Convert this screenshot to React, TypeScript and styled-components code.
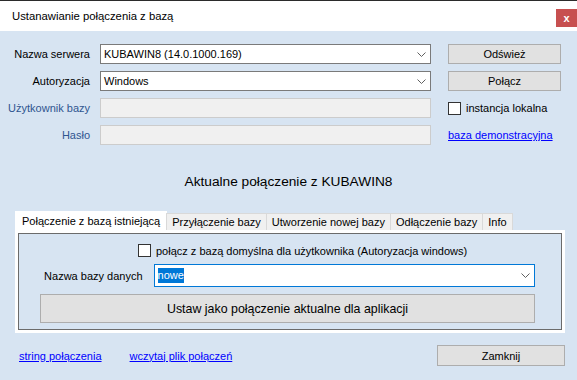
import React from 'react';
import styled, { createGlobalStyle } from 'styled-components';

const GlobalStyle = createGlobalStyle`
  html, body {
    margin: 0;
    padding: 0;
  }
  body {
    font-family: "Liberation Sans", Arial, sans-serif;
  }
`;

const Window = styled.div`
  width: 577px;
  height: 380px;
  display: flex;
  flex-direction: column;
  background: #d7e4f2;
  overflow: hidden;
  font-family: "Liberation Sans", Arial, sans-serif;
  font-size: 11px;
  color: #000;
`;

const TitleBar = styled.div`
  height: 30px;
  flex-shrink: 0;
  display: flex;
  align-items: flex-start;
  padding-left: 12px;
  border-top: 1px solid #2b2b2b;
  background: #fff;
`;

const TitleText = styled.div`
  font-size: 11.3px;
  line-height: 30px;
`;

const CloseButton = styled.div`
  margin-left: auto;
  margin-top: 8px;
  width: 21px;
  height: 18px;
  display: flex;
  align-items: center;
  justify-content: center;
  background: #c75050;
  color: #fff;
  font-weight: bold;
  font-size: 11px;
`;

const Body = styled.div`
  display: flex;
  flex-direction: column;
  padding-top: 13px;
`;

const FormGrid = styled.div`
  display: grid;
  grid-template-columns: 100px 331px 131px;
  grid-auto-rows: 20px;
  row-gap: 7px;
  align-items: center;
`;

const Label = styled.div<{ $muted?: boolean }>`
  text-align: right;
  padding-right: 10px;
  color: ${p => (p.$muted ? '#2f5590' : '#000')};
`;

const Combo = styled.div<{ $focused?: boolean; $height?: number }>`
  box-sizing: border-box;
  height: ${p => p.$height ?? 20}px;
  display: flex;
  align-items: center;
  justify-content: space-between;
  padding: 0 4px 0 3px;
  background: #fff;
  border: 1px solid ${p => (p.$focused ? '#0078d7' : '#7a7a7a')};
`;

const Selected = styled.span`
  background: #0078d7;
  color: #fff;
  line-height: 15px;
`;

const TextBox = styled.div`
  box-sizing: border-box;
  height: 20px;
  background: #f0f0f0;
  border: 1px solid #cccccc;
`;

const Side = styled.div`
  padding-left: 17px;
  display: flex;
  align-items: center;
`;

const Button = styled.div<{ $width: number; $height?: number; $size?: number }>`
  box-sizing: border-box;
  width: ${p => p.$width}px;
  height: ${p => p.$height ?? 20}px;
  display: flex;
  align-items: center;
  justify-content: center;
  background: #e1e1e1;
  border: 1px solid #adadad;
  font-size: ${p => p.$size ?? 11}px;
`;

const CheckRow = styled.label<{ $indent?: number }>`
  display: flex;
  align-items: center;
  gap: 5px;
  margin-left: ${p => p.$indent ?? 0}px;
`;

const CheckBox = styled.span`
  box-sizing: border-box;
  width: 13px;
  height: 13px;
  background: #fff;
  border: 1px solid #333;
`;

const Link = styled.a`
  color: #0000ff;
  text-decoration: underline;
  cursor: pointer;
`;

const Heading = styled.div`
  margin-top: 27px;
  text-align: center;
  font-size: 13.7px;
  line-height: 20px;
`;

const Tabs = styled.div`
  margin: 19px 12px 0 15px;
  display: flex;
  flex-direction: column;
`;

const TabStrip = styled.div`
  display: flex;
  align-items: flex-end;
  height: 19px;
`;

const Tab = styled.div<{ $active?: boolean }>`
  box-sizing: border-box;
  height: ${p => (p.$active ? 19 : 17)}px;
  display: flex;
  align-items: center;
  padding: 0 ${p => (p.$active ? 6 : 5)}px;
  background: ${p => (p.$active ? '#fff' : '#f0f0f0')};
  border: 1px solid ${p => (p.$active ? '#fff' : '#d9d9d9')};
  border-bottom: none;
  margin-left: ${p => (p.$active ? 0 : -1)}px;
`;

const PanelFrame = styled.div`
  padding: 3px;
  background: #fff;
`;

const Panel = styled.div`
  display: flex;
  flex-direction: column;
  gap: 7px;
  padding: 10px 26px 6px 21px;
  background: #d7e4f2;
  border: 1px solid #6b6b6b;
`;

const PanelRow = styled.div`
  display: flex;
  align-items: center;
`;

const PanelLabel = styled.div`
  width: 103px;
  padding-right: 11px;
  text-align: right;
`;

const Footer = styled.div`
  display: flex;
  align-items: center;
  margin-top: 12px;
  padding: 0 12px 0 19px;
  gap: 28px;
`;

const Spacer = styled.div`
  flex: 1;
`;

const Chevron = () => (
  <svg width="9" height="5" viewBox="0 0 9 5">
    <polyline points="0.5,0.5 4.5,4.5 8.5,0.5" fill="none" stroke="#606060" strokeWidth="1" />
  </svg>
);

const App: React.FC = () => {
  return (
    <>
      <GlobalStyle />
      <Window>
        <TitleBar>
          <TitleText>Ustanawianie połączenia z bazą</TitleText>
          <CloseButton>x</CloseButton>
        </TitleBar>
        <Body>
          <FormGrid>
            <Label>Nazwa serwera</Label>
            <Combo>
              <span>KUBAWIN8 (14.0.1000.169)</span>
              <Chevron />
            </Combo>
            <Side>
              <Button $width={113}>Odśwież</Button>
            </Side>

            <Label>Autoryzacja</Label>
            <Combo>
              <span>Windows</span>
              <Chevron />
            </Combo>
            <Side>
              <Button $width={113}>Połącz</Button>
            </Side>

            <Label $muted>Użytkownik bazy</Label>
            <TextBox />
            <Side>
              <CheckRow>
                <CheckBox />
                instancja lokalna
              </CheckRow>
            </Side>

            <Label $muted>Hasło</Label>
            <TextBox />
            <Side>
              <Link>baza demonstracyjna</Link>
            </Side>
          </FormGrid>

          <Heading>Aktualne połączenie z KUBAWIN8</Heading>

          <Tabs>
            <TabStrip>
              <Tab $active>Połączenie z bazą istniejącą</Tab>
              <Tab>Przyłączenie bazy</Tab>
              <Tab>Utworzenie nowej bazy</Tab>
              <Tab>Odłączenie bazy</Tab>
              <Tab>Info</Tab>
            </TabStrip>
            <PanelFrame>
              <Panel>
                <PanelRow>
                  <CheckRow $indent={98}>
                    <CheckBox />
                    połącz z bazą domyślna dla użytkownika (Autoryzacja windows)
                  </CheckRow>
                </PanelRow>
                <PanelRow>
                  <PanelLabel>Nazwa bazy danych</PanelLabel>
                  <Combo $focused $height={23} style={{ width: 383 }}>
                    <Selected>nowe</Selected>
                    <Chevron />
                  </Combo>
                </PanelRow>
                <Button $width={495} $height={29} $size={12.4}>
                  Ustaw jako połączenie aktualne dla aplikacji
                </Button>
              </Panel>
            </PanelFrame>
          </Tabs>

          <Footer>
            <Link>string połączenia</Link>
            <Link>wczytaj plik połączeń</Link>
            <Spacer />
            <Button $width={128} $height={21}>Zamknij</Button>
          </Footer>
        </Body>
      </Window>
    </>
  );
};

export default App;
